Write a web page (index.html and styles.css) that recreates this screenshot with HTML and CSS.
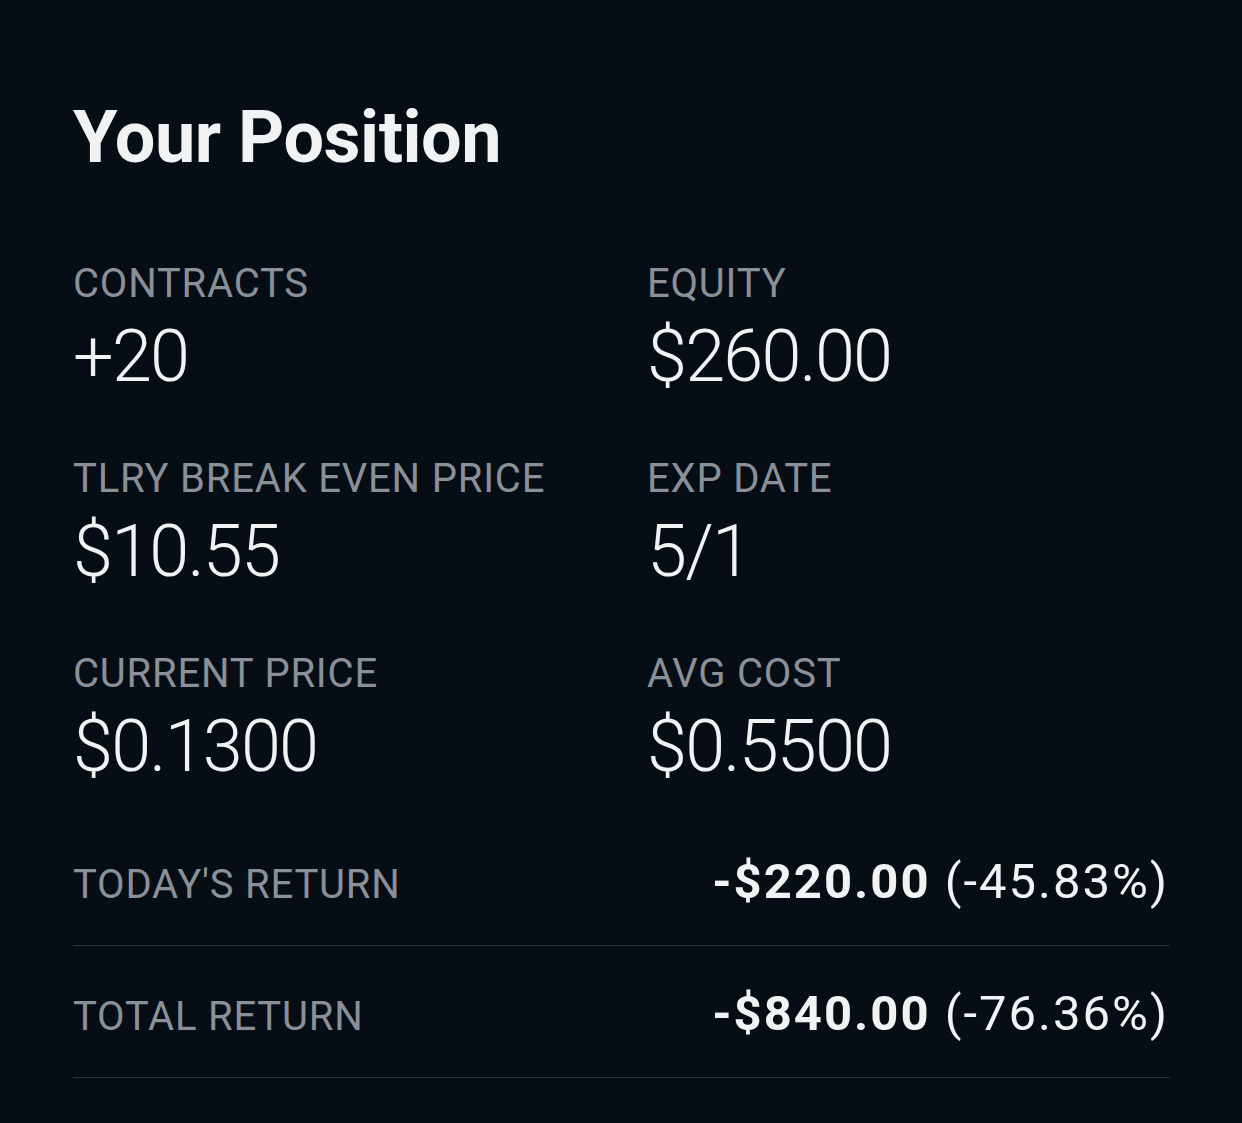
FILE: index.html
```html
<!DOCTYPE html>
<html>
<head>
<meta charset="utf-8">
<link rel="stylesheet" href="styles.css">
</head>
<body>
<main class="panel">
  <h1 class="title">Your Position</h1>
  <section class="stats">
    <div class="stat">
      <div class="label">CONTRACTS</div>
      <div class="value">+20</div>
    </div>
    <div class="stat">
      <div class="label">EQUITY</div>
      <div class="value">$260.00</div>
    </div>
    <div class="stat">
      <div class="label">TLRY BREAK EVEN PRICE</div>
      <div class="value">$10.55</div>
    </div>
    <div class="stat">
      <div class="label">EXP DATE</div>
      <div class="value">5/1</div>
    </div>
    <div class="stat">
      <div class="label">CURRENT PRICE</div>
      <div class="value">$0.1300</div>
    </div>
    <div class="stat">
      <div class="label">AVG COST</div>
      <div class="value">$0.5500</div>
    </div>
  </section>
  <section class="returns">
    <div class="ret-row">
      <span class="label">TODAY'S RETURN</span>
      <span class="ret-val"><b>-$220.00</b> (-45.83%)</span>
    </div>
    <div class="ret-row">
      <span class="label">TOTAL RETURN</span>
      <span class="ret-val"><b>-$840.00</b> (-76.36%)</span>
    </div>
  </section>
</main>
</body>
</html>
```
FILE: styles.css
```css
html, body {
  margin: 0;
  padding: 0;
  background: #070d15;
}
body {
  font-family: "Roboto", "Liberation Sans", sans-serif;
  color: #eef0f3;
}
.panel {
  padding: 98px 72px 0 73px;
}
.title {
  margin: 0;
  font-size: 72px;
  line-height: 80px;
  font-weight: 700;
  color: #f1f2f4;
  letter-spacing: -0.5px;
}
.stats {
  margin-top: 82px;
  display: grid;
  grid-template-columns: 574px 1fr;
  row-gap: 58px;
}
.label {
  font-size: 40px;
  line-height: 48px;
  font-weight: 400;
  color: #8a9097;
  letter-spacing: 0.8px;
}
.value {
  margin-top: 9px;
  font-size: 72px;
  line-height: 80px;
  font-weight: 300;
  color: #f1f2f4;
  letter-spacing: -1.8px;
}
.returns {
  margin-top: 27px;
}
.ret-row {
  display: flex;
  justify-content: space-between;
  align-items: baseline;
  padding: 47px 3px 36px 0;
  border-bottom: 1px solid #2a3038;
}
.ret-val {
  font-size: 49px;
  line-height: 40px;
  font-weight: 400;
  color: #f1f2f4;
  letter-spacing: 2px;
  margin-right: -2px;
}
.ret-val b {
  font-weight: 700;
}
```
